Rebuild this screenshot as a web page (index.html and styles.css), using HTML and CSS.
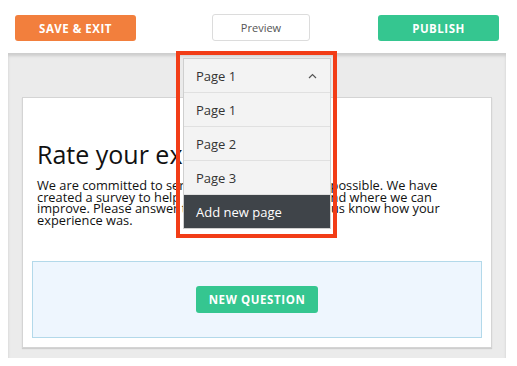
FILE: index.html
```html
<!DOCTYPE html>
<html lang="en">
<head>
  <meta charset="UTF-8">
  <title>Survey Builder</title>
  <link rel="stylesheet" href="styles.css">
</head>
<body>

<div class="page">
  <header class="topbar">
    <button class="btn btn-save">SAVE &amp; EXIT</button>
    <button class="btn btn-preview">Preview</button>
    <button class="btn btn-publish">PUBLISH</button>
  </header>

  <main class="workspace">
    <section class="survey-card">
      <h1 class="survey-title">Rate your experience</h1>
      <p class="survey-intro">
        We are committed to serving you in the best way possible. We have<br>
        created a survey to help us see what we do well and where we can<br>
        improve. Please answer the questions here to let us know how your<br>
        experience was.
      </p>
      <div class="question-drop">
        <button class="btn btn-question">NEW QUESTION</button>
      </div>
    </section>
  </main>

  <!-- page picker, opened -->
  <div class="page-menu">
    <div class="page-menu-head">
      <span>Page 1</span>
      <svg class="caret" width="9" height="6" viewBox="0 0 9 6">
        <polyline points="1,5 4.5,1.5 8,5" fill="none" stroke="#555" stroke-width="1.2"/>
      </svg>
    </div>
    <div class="page-menu-item">Page 1</div>
    <div class="page-menu-item">Page 2</div>
    <div class="page-menu-item">Page 3</div>
    <div class="page-menu-item add-page">Add new page</div>
  </div>

  <!-- highlight frame -->
  <div class="highlight"></div>
</div>

</body>
</html>
```

FILE: styles.css
```css
/* Base */
body {
  margin: 0;
  background-color: #fff;
  font-family: 'Open Sans', 'DejaVu Sans', sans-serif;
  color: #222;
}

.page {
  position: relative;
  width: 517px;
  height: 366px;
}

/* Top bar */
.topbar {
  display: flex;
  justify-content: space-between;
  align-items: center;
  height: 53px;
  padding: 0 18px 0 15px;
  box-sizing: border-box;
}

.btn {
  font-family: 'Open Sans', sans-serif;
  border: none;
  border-radius: 3px;
  cursor: pointer;
}

.btn-save,
.btn-publish {
  width: 121px;
  height: 26px;
  margin-top: 3px;
  color: #fff;
  font-size: 11.5px;
  font-weight: bold;
  letter-spacing: 0.5px;
}

.btn-save {
  background-color: #f27f3d;
}

.btn-publish {
  background-color: #35c690;
}

.btn-preview {
  width: 98px;
  height: 27px;
  margin-top: 2px;
  margin-left: 8px;
  background-color: #fff;
  border: 1px solid #dcdcdc;
  color: #555;
  font-size: 11px;
}

/* Gray workspace */
.workspace {
  height: 305px;
  margin: 0 11px 0 8px;
  padding: 44px 14px 10px;
  box-sizing: border-box;
  background-color: #ebebeb;
  box-shadow: inset 0 3px 3px rgba(0, 0, 0, 0.13);
}

.survey-card {
  display: flex;
  flex-direction: column;
  height: 100%;
  padding: 0 9px 9px;
  box-sizing: border-box;
  background-color: #fff;
  border: 1px solid #d4d4d4;
  box-shadow: 0 1px 1px rgba(0, 0, 0, 0.12);
}

.survey-title {
  margin: 41px 0 0 5px;
  font-size: 25px;
  font-weight: normal;
  line-height: 30px;
  color: #111;
}

.survey-intro {
  margin: 11px 0 0 5px;
  font-size: 12.8px;
  line-height: 11.5px;
  color: #111;
}

.question-drop {
  display: flex;
  justify-content: center;
  align-items: center;
  height: 77px;
  margin-top: auto;
  box-sizing: border-box;
  background-color: #eef6fe;
  border: 1px solid #b3d9ea;
}

.btn-question {
  width: 122px;
  height: 27px;
  background-color: #35c690;
  color: #fff;
  font-size: 11.5px;
  font-weight: bold;
  letter-spacing: 0.6px;
}

/* Page dropdown */
.page-menu {
  position: absolute;
  left: 183px;
  top: 58px;
  width: 148px;
  background-color: #f3f3f3;
  border: 1px solid #cfcfcf;
  box-sizing: border-box;
  font-size: 13px;
  color: #333;
}

.page-menu-head,
.page-menu-item {
  display: flex;
  justify-content: space-between;
  align-items: center;
  height: 33px;
  padding: 0 12px;
  border-bottom: 1px solid #e0e0e0;
}

.caret {
  margin-right: 1px;
}

.page-menu-item.add-page {
  height: 33px;
  border-bottom: none;
  background-color: #3f4449;
  color: #fff;
}

/* Red annotation frame */
.highlight {
  position: absolute;
  left: 176px;
  top: 51px;
  width: 161px;
  height: 187px;
  box-sizing: border-box;
  border: 4px solid #f23d17;
}
```
